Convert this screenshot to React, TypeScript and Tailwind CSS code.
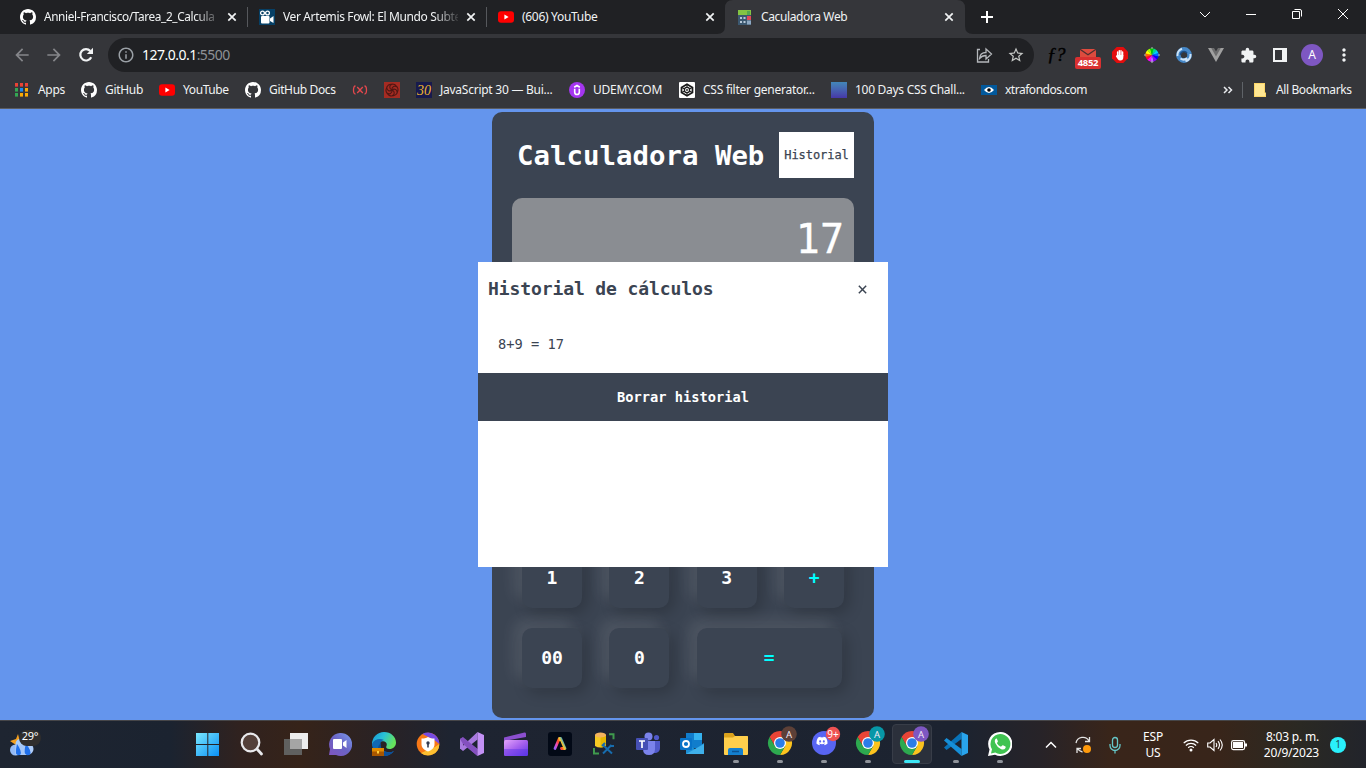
import React from 'react';
import { FaDiscord } from 'react-icons/fa';
import {
  MdArrowBack,
  MdArrowForward,
  MdInfoOutline,
  MdStarBorder,
  MdMoreVert,
  MdExtension,
} from 'react-icons/md';

type IconProps = { className?: string };

const GitHubIcon = ({ className = 'size-4' }: IconProps) => (
  <svg viewBox="0 0 16 16" className={className} fill="#fff">
    <path d="M8 0C3.58 0 0 3.58 0 8c0 3.54 2.29 6.53 5.47 7.59.4.07.55-.17.55-.38 0-.19-.01-.82-.01-1.49-2.01.37-2.53-.49-2.69-.94-.09-.23-.48-.94-.82-1.13-.28-.15-.68-.52-.01-.53.63-.01 1.08.58 1.23.82.72 1.21 1.87.87 2.33.66.07-.52.28-.87.51-1.07-1.78-.2-3.64-.89-3.64-3.95 0-.87.31-1.59.82-2.15-.08-.2-.36-1.02.08-2.12 0 0 .67-.21 2.2.82.64-.18 1.32-.27 2-.27.68 0 1.36.09 2 .27 1.53-1.04 2.2-.82 2.2-.82.44 1.1.16 1.92.08 2.12.51.56.82 1.27.82 2.15 0 3.07-1.87 3.75-3.65 3.95.29.25.54.73.54 1.48 0 1.07-.01 1.93-.01 2.2 0 .21.15.46.55.38A8.013 8.013 0 0 0 16 8c0-4.42-3.58-8-8-8z" />
  </svg>
);

const YouTubeIcon = () => (
  <svg viewBox="0 0 16 16" className="size-4">
    <rect x="0" y="2.3" width="16" height="11.4" rx="3" fill="#f00" />
    <path d="M6.4 5.6v4.8L10.6 8z" fill="#fff" />
  </svg>
);

const CameraIcon = () => (
  <svg viewBox="0 0 16 16" className="size-4">
    <rect width="16" height="16" fill="#064066" />
    <circle cx="3.5" cy="4" r="1.9" fill="none" stroke="#fff" strokeWidth="1.3" />
    <circle cx="8.5" cy="4" r="1.9" fill="none" stroke="#fff" strokeWidth="1.3" />
    <rect x="2" y="7" width="8.5" height="7.5" rx="1" fill="#fff" />
    <path d="M11 9.5 14.5 7v7L11 12z" fill="#fff" />
  </svg>
);

const CalculatorIcon = () => (
  <svg viewBox="0 0 16 16" className="size-4">
    <rect x="1" y="1" width="13" height="15" fill="#3c5870" />
    <rect x="1" y="1" width="13" height="5" fill="#84c443" />
    <rect x="10" y="2" width="3" height="4" fill="#55a84f" />
    <path d="M3 8h2v2H3zM6.5 8h2v2h-2zM3 12h2v2H3zM6.5 12h2v2h-2z" fill="#b8c9d9" />
    <rect x="10" y="7" width="4" height="4" fill="#e0495a" />
    <rect x="10" y="11.5" width="4" height="4" fill="#8fa9c4" />
  </svg>
);

const Cross = () => (
  <svg viewBox="0 0 16 16" className="size-4 shrink-0" stroke="#f1f3f4" strokeWidth="1.7">
    <path d="m4.3 4.3 7.4 7.4M11.7 4.3l-7.4 7.4" />
  </svg>
);

const AppsIcon = () => {
  const colors = ['#ea4335', '#ea4335', '#ea4335', '#34a853', '#1a8cf0', '#fbab05', '#34a853', '#fbab05', '#fbab05'];
  return (
    <svg viewBox="0 0 16 16" className="size-4">
      {colors.map((c, i) => (
        <rect key={i} x={1 + (i % 3) * 5} y={1 + Math.floor(i / 3) * 5} width="3" height="3.6" fill={c} />
      ))}
    </svg>
  );
};

const BraceX = () => (
  <svg viewBox="0 0 16 16" className="size-4" fill="none" stroke="#e5484d" strokeWidth="1.3">
    <path d="M3.500 4Q1.500 4 1.500 8T3.500 12M12.500 4q2 0 2 4t-2 4M5.200 5l5.600 6M10.800 5l-5.600 6" />
  </svg>
);

const SwirlIcon = () => (
  <svg viewBox="0 0 16 16" className="size-4">
    <rect width="16" height="16" fill="#a52b22" />
    <g fill="none" stroke="#501713" strokeWidth="1.1">
      {[0, 60, 120, 180, 240, 300].map((a) => (
        <path key={a} d="M8 8c-3-1-3-5 0-6 2 0 4 1 4.500 3" transform={`rotate(${a} 8 8)`} />
      ))}
    </g>
  </svg>
);

const ThirtyIcon = () => (
  <svg viewBox="0 0 16 16" className="size-4">
    <rect width="16" height="16" fill="#171a4d" />
    <text x="8" y="13" textAnchor="middle" fontSize="14" fontStyle="italic" fontFamily="Liberation Serif, serif" fill="#efb42e">
      30
    </text>
  </svg>
);

const UdemyIcon = () => (
  <svg viewBox="0 0 16 16" className="size-4">
    <circle cx="8" cy="8" r="8" fill="#a435f0" />
    <path d="M5.700 6.800v3.400a2.300 2.300 0 0 0 4.600 0V6.800M5.200 5.200 8 3.500l2.800 1.700" fill="none" stroke="#fff" strokeWidth="1.600" />
  </svg>
);

const FilterIcon = () => (
  <svg viewBox="0 0 16 16" className="size-4">
    <rect width="16" height="16" rx="1" fill="#fff" />
    <path d="M8 2.300 13.500 5.500v5L8 13.700l-5.500-3.200v-5z" fill="none" stroke="#1b1b1b" strokeWidth="1.700" />
    <path d="M8 2.500v3M8 10.500v3M2.500 5.500 13.500 10.500M13.500 5.500 2.500 10.500" stroke="#1b1b1b" strokeWidth="1.100" />
    <circle cx="8" cy="8" r="2.600" fill="#fff" stroke="#1b1b1b" strokeWidth="1.300" />
    <circle cx="8" cy="8" r=".9" fill="#1b1b1b" />
  </svg>
);

const GradientIcon = () => <div className="size-4 bg-linear-to-b from-[#4286b8] to-[#4637a8]" />;

const EyeIcon = () => (
  <svg viewBox="0 0 16 16" className="size-4">
    <rect y="3" width="16" height="10" fill="#02599c" />
    <path d="M3 8q5-6 10 0-5 6-10 0z" fill="#fff" />
    <circle cx="8" cy="8" r="1.800" fill="#000" />
  </svg>
);

const tabs = [
  { icon: <GitHubIcon />, title: 'Anniel-Francisco/Tarea_2_Calcula', track: 'text-[11.8px] tracking-[-0.36px]' },
  { icon: <CameraIcon />, title: 'Ver Artemis Fowl: El Mundo Subte', track: 'text-[12px] tracking-[-0.37px]' },
  { icon: <YouTubeIcon />, title: '(606) YouTube', track: 'text-[12px] tracking-[-0.3px]' },
  { icon: <CalculatorIcon />, title: 'Caculadora Web', track: 'text-[12px] tracking-[-0.38px]' },
];

const windowButtons = [
  'M-5-2 0 3 5-2',
  'M-5 .5H5',
  'M-4.500-2.500h7v7h-7zM-2.500-4.500h5.500q1.500 0 1.500 1.500v5.500',
  'M-5-5 5 5M5-5-5 5',
];

function TabStrip() {
  return (
    <div className="flex h-[34px] bg-[#202124] pl-2 text-xs text-[#f1f3f4]">
      {tabs.map((t, i) => (
        <div key={t.title} className="relative flex w-[239px] shrink-0">
          {i === 3 && (
            <svg viewBox="0 0 256 34" className="absolute -left-2 top-0 h-[34px] w-[256px]">
              <path d="M0 34q8 0 8-8V8q0-8 8-8h224q8 0 8 8v18q0 8 8 8z" fill="#35363a" />
            </svg>
          )}
          <div className="relative flex grow items-center pl-3 pr-[7px]">
            <div className="size-4 shrink-0">{t.icon}</div>
            <div className={`ml-2 mr-[5px] w-[175px] whitespace-nowrap ${t.track} ${i < 2 ? 'mask-r-from-86% mask-r-to-102%' : ''}`}>
              {t.title}
            </div>
            <Cross />
          </div>
          {i < 2 && <div className="absolute -right-px top-[7px] h-5 w-px bg-[#56585c]" />}
        </div>
      ))}
      <div className="flex grow items-center justify-between pl-[14px]">
        <svg viewBox="0 0 18 18" className="size-[18px]" stroke="#fff" strokeWidth="2">
          <path d="M9 3v12M3 9h12" />
        </svg>
        <div className="flex h-full items-start">
          {windowButtons.map((d) => (
            <svg key={d} viewBox="-23 -14 46 28" className="h-7 w-[46px]" fill="none" stroke="#fff" strokeWidth="1">
              <path d={d} />
            </svg>
          ))}
        </div>
      </div>
    </div>
  );
}

const MailBadge = () => (
  <div className="flex w-[26px] shrink-0 flex-col items-center pt-[7px]">
    <svg viewBox="0 0 16 8" className="h-2 w-4">
      <path d="M0 0h16v8H0z" fill="#dd4b3e" />
      <path d="M0 .3l8 5.500L16 .3" fill="none" stroke="#4d2f30" strokeWidth="1.300" />
    </svg>
    <div className="flex h-3 w-[26px] items-center justify-center rounded-[2px] bg-[#d93030] text-[9.500px] font-bold leading-none tracking-[-0.3px] text-white">
      4852
    </div>
  </div>
);

const HandIcon = () => (
  <svg viewBox="0 0 16 16" className="size-4">
    <path d="M4.700 0h6.600L16 4.700v6.600L11.300 16H4.700L0 11.300V4.700z" fill="#e40d0d" />
    <path d="M5.600 5v4.500M7.300 3.600V9M9 3.600V9M10.600 5v4" stroke="#fff" strokeWidth="1.400" strokeLinecap="round" />
    <path d="M4.900 8h6.400v2.500q0 3-3 3-1.700 0-2.500-1.300l-2-3z" fill="#fff" />
  </svg>
);

const WheelIcon = () => {
  const colors = ['#b6f', '#f0f', '#f03', '#f60', '#ff0', '#9f0', '#0c0', '#0d8', '#0cf', '#06f', '#00f', '#80f'];
  return (
    <svg viewBox="-8 -8 16 16" className="size-4">
      {colors.map((c, i) => (
        <path key={c} d="M0 0-1.900-6.400A6.700 6.700 0 0 1 1.900-6.400z" fill={c} transform={`rotate(${i * 30 + 180})`} />
      ))}
      <path d="M0-8v2M0 6v2M-8 0h2M6 0h2" stroke="#bbb" strokeWidth="1" />
    </svg>
  );
};

const RingIcon = () => (
  <svg viewBox="0 0 16 16" className="size-4" fill="none">
    <circle cx="8" cy="8" r="5.600" stroke="#4688c8" strokeWidth="4.600" />
    <path d="M1.500 9A6.700 6.700 0 0 1 6 1.800M14.500 7a6.700 6.700 0 0 1-5 7.300M4.500 11.500Q8 14 11 11" stroke="#cfe4f7" strokeWidth="2" />
    <path d="M4.300 8A3.700 3.700 0 0 1 11 6" stroke="#1d4e86" strokeWidth="1.500" />
  </svg>
);

const VueIcon = () => (
  <svg viewBox="0 0 16 16" className="size-4">
    <path d="M0 1h5l3 5 3-5h5L8 15z" fill="#a0a0a0" />
    <path d="M3.200 1H6l2 3.500L10 1h2.800L8 9.500z" fill="#6d6d6e" />
  </svg>
);

const Slot = ({ children }: { children: React.ReactNode }) => (
  <div className="flex w-8 shrink-0 items-center justify-center">{children}</div>
);

function Toolbar() {
  return (
    <div className="flex h-[42px] items-center bg-[#35363a] pl-[6px]">
      <Slot><MdArrowBack className="size-5 text-[#85868a]" /></Slot>
      <Slot><MdArrowForward className="size-5 text-[#85868a]" /></Slot>
      <Slot>
        <svg viewBox="0 0 16 16" className="size-4">
          <path d="M13.200 10.200A5.700 5.700 0 1 1 12.300 4" fill="none" stroke="#f1f3f4" strokeWidth="2.200" />
          <path d="M15 .8V7H8.800z" fill="#f1f3f4" />
        </svg>
      </Slot>
      <div className="ml-[6px] flex h-[34px] w-[926px] items-center rounded-full bg-[#202124] pl-[9px]">
        <MdInfoOutline className="size-[18px] text-[#9aa0a6]" />
        <div className="ml-[7px] grow text-sm tracking-[-0.52px] text-white">
          127.0.0.1<span className="text-[#8e9196]">:5500</span>
        </div>
        <Slot>
          <svg viewBox="0 0 18 18" className="size-[18px]" fill="none" stroke="#b4b7bb" strokeWidth="1.300">
            <path d="M5 3.500H2.500V16h11v-3M4.500 12.500Q5 6.500 11 6.500V3l5.500 5-5.500 5V9.500Q7 9.500 4.500 12.500z" />
          </svg>
        </Slot>
        <Slot><MdStarBorder className="size-[18px] text-[#c4c7c5]" /></Slot>
        <div className="w-[2px]" />
      </div>
      <div className="flex grow items-center pl-[6px]">
        <Slot>
          <span className="pb-[2px] font-['Liberation_Serif',serif] text-[19px] italic leading-none tracking-[-0.5px] text-black [-webkit-text-stroke:0.4px_#000]">ƒ?</span>
        </Slot>
        <Slot><MailBadge /></Slot>
        <Slot><HandIcon /></Slot>
        <Slot><WheelIcon /></Slot>
        <Slot><RingIcon /></Slot>
        <Slot><VueIcon /></Slot>
        <Slot><MdExtension className="size-[17px] text-[#f1f3f4]" /></Slot>
        <Slot>
          <svg viewBox="0 0 14 14" className="size-[14px]">
            <path d="M1 1h12v12H1z" fill="none" stroke="#f1f3f4" strokeWidth="2" />
            <rect x="9" y="1" width="4" height="12" fill="#f1f3f4" />
          </svg>
        </Slot>
        <Slot>
          <div className="flex size-[22px] shrink-0 items-center justify-center rounded-full bg-[#7e57c2] text-xs text-white">A</div>
        </Slot>
        <Slot><MdMoreVert className="size-5 text-[#f1f3f4]" /></Slot>
      </div>
    </div>
  );
}

const bookmarks = [
  { icon: <AppsIcon />, text: 'Apps', box: 'w-[27px] tracking-[-0.3px]' },
  { icon: <GitHubIcon />, text: 'GitHub', box: 'w-[38px] tracking-[-0.3px]' },
  { icon: <YouTubeIcon />, text: 'YouTube', box: 'w-[46px] tracking-[-0.4px]' },
  { icon: <GitHubIcon />, text: 'GitHub Docs', box: 'w-[67px] tracking-[-0.35px]' },
  { icon: <BraceX />, text: '', box: '' },
  { icon: <SwirlIcon />, text: '', box: '' },
  { icon: <ThirtyIcon />, text: 'JavaScript 30 — Bui...', box: 'w-[113px] tracking-[-0.25px]' },
  { icon: <UdemyIcon />, text: 'UDEMY.COM', box: 'w-[70px] tracking-[-0.25px]' },
  { icon: <FilterIcon />, text: 'CSS filter generator...', box: 'w-[112px] tracking-[-0.25px]' },
  { icon: <GradientIcon />, text: '100 Days CSS Chall...', box: 'w-[110px] tracking-[-0.28px]' },
  { icon: <EyeIcon />, text: 'xtrafondos.com', box: 'w-[82px] tracking-[-0.48px]' },
];

function Bookmarks() {
  return (
    <div className="flex h-[33px] items-center border-b border-[#5a5c61] bg-[#35363a] pb-[5px] pl-[14px] text-xs text-[#f1f3f4]">
      <div className="flex grow items-center gap-4">
        {bookmarks.map((b, i) => (
          <div key={i} className="flex items-center gap-2">
            <div className="size-4 shrink-0">{b.icon}</div>
            {b.text && <div className={`whitespace-nowrap ${b.box}`}>{b.text}</div>}
          </div>
        ))}
      </div>
      <svg viewBox="0 0 10 8" className="mr-[9px] h-2 w-[10px]" fill="none" stroke="#e8eaed" strokeWidth="1.500">
        <path d="m1 1 3 3-3 3M5.500 1l3 3-3 3" />
      </svg>
      <div className="h-4 w-px bg-[#5f6368]" />
      <svg viewBox="0 0 12 14" className="ml-[11px] h-[14px] w-3">
        <path d="M0 0h11v9l1 1v4H0z" fill="#fcd668" />
        <path d="M1 1h9v9h1v3H1z" fill="#ffe793" />
      </svg>
      <div className="ml-[10px] mr-[14px] w-[76px] whitespace-nowrap tracking-[-0.4px]">All Bookmarks</div>
    </div>
  );
}

const keyBase =
  'flex h-[60px] items-center justify-center rounded-[10px] bg-[#3b4452] pb-[2px] shadow-[-8px_-8px_15px_rgba(255,255,255,0.1),5px_5px_15px_rgba(0,0,0,0.2)]';

function Calculator() {
  return (
    <div className="relative flex h-[611px] justify-center bg-[#6495ed] pt-[3px] font-['DejaVu_Sans_Mono','Liberation_Mono',monospace]">
      <div className="flex h-[606px] w-[382px] flex-col rounded-[10px] bg-[#3b4452] p-5 text-white">
        <div className="flex h-[46px] shrink-0 items-center justify-between pl-[5px]">
          <h1 className="whitespace-nowrap pt-[2px] text-[27.400px] font-bold leading-none">Calculadora Web</h1>
          <button className="flex h-[46px] w-[75px] items-center justify-center bg-white text-[12px] tracking-[-0.05px] text-[#3b4452] [-webkit-text-stroke:0.25px_#3b4452]">
            Historial
          </button>
        </div>
        <div className="mt-5 h-[90px] shrink-0 rounded-[10px] bg-[#8a8d92] pr-[10px] pt-[18px] text-right text-[40px] leading-[46px] [-webkit-text-stroke:0.3px_#fff]">17</div>
        <div className="mt-auto grid grid-cols-[60px_60px_60px_60px] gap-x-[27.400px] gap-y-5 px-[10px] pb-[10px] text-[18px] font-bold">
          <div className={keyBase}>1</div>
          <div className={keyBase}>2</div>
          <div className={keyBase}>3</div>
          <div className={`${keyBase} text-[#00ffff]`}>+</div>
          <div className={keyBase}>00</div>
          <div className={keyBase}>0</div>
          <div className={`${keyBase} col-span-2 w-[145px] text-[#00ffff]`}>=</div>
        </div>
      </div>

      <div className="absolute left-[478px] top-[153px] h-[305px] w-[410px] bg-white text-[#3b4452]">
        <div className="flex h-[54px] items-center justify-between pl-[10px] pr-[20px]">
          <h2 className="pb-[2px] text-[18px] font-bold tracking-[-0.100px]">Historial de cálculos</h2>
          <svg viewBox="0 0 12 12" className="size-[11px]" stroke="#3b4452" strokeWidth="1.600">
            <path d="m2 2 8 8M10 2l-8 8" />
          </svg>
        </div>
        <div className="flex h-[57px] items-center pl-5 text-[13.700px]">8+9 = 17</div>
        <button className="flex h-12 w-full items-center justify-center bg-[#3b4452] text-[13.700px] font-bold text-white">
          Borrar historial
        </button>
      </div>
    </div>
  );
}

const ChromeIcon = ({ badge }: { badge: string }) => (
  <svg viewBox="0 0 30 30" className="size-[30px]">
    <g transform="translate(13 17)">
      <path d="M-10.400-6A12 12 0 0 1 10.400-6H0L-5.200 3z" fill="#e84436" />
      <path d="M10.400-6A12 12 0 0 1 0 12L5.200 3 0-6z" fill="#fcc31e" />
      <path d="M0 12A12 12 0 0 1-10.400-6L-5.200 3 5.200 3z" fill="#2da94f" />
      <circle r="6" fill="#fff" />
      <circle r="4.800" fill="#2a7de9" />
    </g>
    <circle cx="22" cy="8" r="7.800" fill={badge} />
    <text x="22" y="11.500" fontSize="9.500" textAnchor="middle" fill="#f3e9f5">A</text>
  </svg>
);

const WindowsIcon = () => (
  <svg viewBox="0 0 24 24" className="size-6">
    <defs>
      <linearGradient id="win" x1="0" y1="0" x2="1" y2="1">
        <stop stopColor="#7ae8ff" />
        <stop offset="1" stopColor="#0a8ff5" />
      </linearGradient>
    </defs>
    <path d="M0 1h11.300v11H0zM12.300 1H23v11H12.300zM0 13h11.300v11H0zM12.300 13H23v11H12.300z" fill="url(#win)" />
  </svg>
);

const SearchIcon = () => (
  <svg viewBox="0 0 24 24" className="size-6" fill="none" stroke="#e9e9ec">
    <circle cx="10.500" cy="10.500" r="8.800" strokeWidth="2.200" fill="#54403a" />
    <path d="m17 17 4.500 5" strokeWidth="2.800" strokeLinecap="round" />
  </svg>
);

const TaskViewIcon = () => (
  <svg viewBox="0 0 24 24" className="size-6">
    <rect x="6" y="1" width="18" height="16" fill="#ededed" />
    <rect x="0" y="7" width="18" height="16" fill="#60605f" />
    <rect x="6" y="7" width="12" height="10" fill="#a5a5a5" />
  </svg>
);

const ChatIcon = () => (
  <svg viewBox="0 0 24 24" className="size-6">
    <defs>
      <linearGradient id="chat" x1="0" y1="1" x2="1" y2="0">
        <stop stopColor="#8054be" />
        <stop offset=".5" stopColor="#6a63c4" />
        <stop offset="1" stopColor="#7a9cef" />
      </linearGradient>
    </defs>
    <path d="M12 1a11.500 11.500 0 1 1-4 22H1l1-6A11.500 11.500 0 0 1 12 1z" fill="url(#chat)" />
    <rect x="5" y="7" width="9" height="10" rx="1" fill="#fff" />
    <path d="m15 10.500 3.500-2.500v8L15 13.500z" fill="#fff" />
  </svg>
);

const EdgeIcon = () => (
  <svg viewBox="0 0 24 24" className="size-6">
    <defs>
      <linearGradient id="edge" x1="0" y1="0" x2="1" y2=".4">
        <stop stopColor="#1596d8" />
        <stop offset=".5" stopColor="#29c1d6" />
        <stop offset="1" stopColor="#66e35b" />
      </linearGradient>
    </defs>
    <path d="M0 12A12 12 0 0 1 12 0c7 0 12 5 12 10.500 0 4-3 6.500-6.500 6.500-3 0-4-1.500-3-3 1.500-4-3-6-8-4C3 11 0 14 0 14z" fill="url(#edge)" />
    <path d="M0 12C2 7 8 6 12 8c-4 1-5 5-2 9 3 4 9 4 12 2-3 4-7 5-10 5A12 12 0 0 1 0 12z" fill="#1068b4" />
    <path d="M9 11q-2 7 5 9 4 1 8-1-4 5-10 5-6-1-6-7 0-4 3-6z" fill="#0d4f98" />
    <rect y="16" width="12" height="8" fill="#e08a00" />
    <path d="M0 19.500h12V24H0z" fill="#a85600" />
    <rect x="5" y="19" width="2" height="2.500" fill="#ffcf3b" />
  </svg>
);

const BrowserShieldIcon = () => (
  <svg viewBox="0 0 24 24" className="size-6">
    <circle cx="12" cy="12" r="11.300" fill="#f87816" />
    <path d="M6.500 2A11.300 11.300 0 0 1 23.300 12l-5-4z" fill="#774be2" />
    <path d="M23.300 12A11.300 11.300 0 0 1 5 21l14-6z" fill="#fdbf30" />
    <path d="M12 5c3 2 6.500 1.500 6.500 1.500v6c0 3.500-3.500 6-6.500 7-3-1-6.500-3.500-6.500-7v-6S9 7 12 5z" fill="#fff" />
    <circle cx="12" cy="11" r="1.700" fill="#343b51" />
    <path d="M11.200 11h1.600v4.500h-1.600z" fill="#343b51" />
  </svg>
);

const VisualStudioIcon = () => (
  <svg viewBox="0 0 24 24" className="size-6">
    <path d="m0 7 2.500-1.500L17.500 17v7L0 9z" fill="#8d58c8" />
    <path d="M0 17V7l3 2v6zM0 16.500 17.500 0v7.500L3 19z" fill="#a879df" />
    <path d="m0 7 3-2 14.500 12v7L3 12z" fill="#8450bf" />
    <path d="m17.500 0 6.500 3v18l-6.500 3z" fill="#c391f5" />
  </svg>
);

const ClipchampIcon = () => (
  <svg viewBox="0 0 24 24" className="size-6">
    <defs>
      <linearGradient id="clip" x1="0" y1="0" x2="1" y2="1">
        <stop stopColor="#e4a4fb" />
        <stop offset=".5" stopColor="#a660ee" />
        <stop offset="1" stopColor="#5836e8" />
      </linearGradient>
    </defs>
    <path d="M0 5.500 20.500.500Q22 0 22 2v3L0 9z" fill="#8b4fcf" />
    <rect y="8" width="24" height="16" rx="1.500" fill="url(#clip)" />
    <path d="M0 17h24v5q0 2-2 2H2q-2 0-2-2z" fill="#5b34e6" opacity=".45" />
  </svg>
);

const AdobeExpressIcon = () => (
  <svg viewBox="0 0 24 24" className="size-6">
    <defs>
      <linearGradient id="adb" x1="0" y1="1" x2="1" y2=".5">
        <stop stopColor="#985ff8" />
        <stop offset=".3" stopColor="#f049b3" />
        <stop offset=".55" stopColor="#ff4a20" />
        <stop offset=".75" stopColor="#f8c830" />
        <stop offset="1" stopColor="#36a8d0" />
      </linearGradient>
    </defs>
    <rect width="24" height="24" rx="3" fill="#020916" />
    <path d="M7 16.500 11.300 6.500h1.400L17 16.500h-3.500" fill="none" stroke="url(#adb)" strokeWidth="2.800" strokeLinejoin="round" strokeLinecap="round" />
  </svg>
);

const DatabaseToolIcon = () => (
  <svg viewBox="0 0 24 24" className="size-6">
    <path d="M17 2.200h4.500v5M2 16v5.500h5" fill="none" stroke="#3f9a4d" strokeWidth="2" />
    <path d="M3 3v11q5 3 11 0V3z" fill="#f6ca24" />
    <path d="M8.500 4H14v10q-2 1-5.500 1.500z" fill="#e6b800" />
    <ellipse cx="8.500" cy="3" rx="5.500" ry="2.500" fill="#f5b45e" />
    <path d="m11.500 13.500 8.500 8M19.500 13l-8.500 8.500M10 14l3-3M18 14h4" stroke="#176cae" strokeWidth="2" />
  </svg>
);

const TeamsIcon = () => (
  <svg viewBox="0 0 24 24" className="size-6">
    <circle cx="12.500" cy="4.500" r="4" fill="#7b83eb" />
    <circle cx="20.500" cy="5.500" r="2.600" fill="#5059c9" />
    <path d="M16 9h8v7q0 4-4 5h-4z" fill="#5059c9" />
    <path d="M7 9h12v8q0 6-6 6t-6-6z" fill="#7b83eb" />
    <rect y="6" width="12" height="12" rx="1" fill="#4650b5" />
    <path d="M3 9h6M6 9v7" stroke="#fff" strokeWidth="1.700" />
  </svg>
);

const OutlookIcon = () => (
  <svg viewBox="0 0 24 24" className="size-6">
    <rect x="6" y="1" width="16" height="15" fill="#117dcc" />
    <path d="M14 1h8v7h-8z" fill="#35b2ef" />
    <path d="M6 11l9 6 9-6v11H6z" fill="#1d8fd6" />
    <path d="m6 22 18-10v10z" fill="#3fb0ea" />
    <rect y="6" width="12" height="12" rx="1" fill="#0873c8" />
    <circle cx="6" cy="12" r="3" fill="none" stroke="#fff" strokeWidth="1.800" />
  </svg>
);

const FolderIcon = () => (
  <svg viewBox="0 0 24 24" className="size-6">
    <path d="M0 2q0-1 1-1h8l2 3h12q1 0 1 1v6H0z" fill="#dba21c" />
    <path d="M0 5.500h9l2-1.500h12q1 0 1 1v17q0 1-1 1H1q-1 0-1-1z" fill="#ffcf4c" />
    <path d="M4 23v-5q0-2 2-2h11q2 0 2 2v5z" fill="#1480cf" />
    <path d="M8 19.500h7" stroke="#0b5292" strokeWidth="1.500" />
  </svg>
);

const DiscordIcon = () => (
  <svg viewBox="0 0 30 30" className="size-[30px]">
    <circle cx="13" cy="17" r="12" fill="#5865f2" />
    <FaDiscord x="5" y="9" width="16" height="16" color="#fff" />
    <circle cx="22" cy="8" r="7.200" fill="#ee5253" />
    <text x="22" y="11.800" fontSize="10" textAnchor="middle" fill="#fff">9+</text>
  </svg>
);

const CodeIcon = () => (
  <svg viewBox="0 0 24 24" className="size-6">
    <path d="M0 15.500 17.500 0v7L2.500 18z" fill="#0873b9" />
    <path d="M0 8.500 17.500 24v-7L2.500 6z" fill="#168fd8" />
    <path d="M17.500 0 24 3v18l-6.500 3z" fill="#29a4ec" />
  </svg>
);

const WhatsAppIcon = () => (
  <svg viewBox="0 0 24 24" className="size-6">
    <path d="M12 0a12 12 0 1 1-5 22.700L0 24l1.500-6.500A12 12 0 0 1 12 0z" fill="#fff" />
    <path d="M12 2a10 10 0 1 1-4.700 18.600L3 21.500l1-4.200A10 10 0 0 1 12 2z" fill="#40c351" />
    <path d="M8.200 6.500q-2.200 1.500-1 4.500 2 4.500 6 6.300 3 1 4.300-1.300.4-1.200 0-1.500l-2.500-1.300q-.7-.2-1.500 1-.5.5-1.200.2-2-1-3.200-3-.3-.5.200-1t.6-1.200l-1-2.500q-.3-.4-.7-.2z" fill="#fff" />
  </svg>
);

const apps: { icon: React.ReactNode; raised?: boolean; state?: 'open' | 'active' }[] = [
  { icon: <WindowsIcon /> },
  { icon: <SearchIcon /> },
  { icon: <TaskViewIcon /> },
  { icon: <ChatIcon /> },
  { icon: <EdgeIcon /> },
  { icon: <BrowserShieldIcon /> },
  { icon: <VisualStudioIcon /> },
  { icon: <ClipchampIcon /> },
  { icon: <AdobeExpressIcon /> },
  { icon: <DatabaseToolIcon /> },
  { icon: <TeamsIcon /> },
  { icon: <OutlookIcon /> },
  { icon: <FolderIcon />, state: 'open' },
  { icon: <ChromeIcon badge="#5d4037" />, raised: true, state: 'open' },
  { icon: <DiscordIcon />, raised: true, state: 'open' },
  { icon: <ChromeIcon badge="#0797a7" />, raised: true, state: 'open' },
  { icon: <ChromeIcon badge="#7e57c2" />, raised: true, state: 'active' },
  { icon: <CodeIcon />, state: 'open' },
  { icon: <WhatsAppIcon />, state: 'open' },
];

function Taskbar() {
  return (
    <div className="flex h-12 border-t border-[#464649] bg-[linear-gradient(90deg,#1e2531_0,#1b2330_170px,#30221f_240px,#362319_300px,#282226_390px,#1e2431_450px,#1c2330_960px,#272328_1040px,#39251a_1110px,#38251a_1220px,#2a2923_1300px,#22242b_1366px)] text-xs text-white">
      <div className="w-[186px] pl-[9px] pt-[6px]">
        <div className="relative h-8 w-9">
          <svg viewBox="0 0 26 26" className="mt-[4px] size-[26px]">
            <path d="m9 3 1 4 6-4-3 6 4 4-7 3-9-6 6-2z" fill="#f4a01f" />
            <circle cx="12" cy="13" r="5.500" fill="#a9cdfa" />
            <circle cx="6.500" cy="19" r="5.500" fill="#94bbf6" />
            <circle cx="19" cy="18" r="5.500" fill="#b0cdf9" />
            <path d="M6 14h14v10H6z" fill="#a4c6f8" />
            <path d="M8 13q5 7 3.500 10.500-2.500 2-4.500-1Q6.500 19 8 13zM17 13q6 7 4 10.500-3 2-5-1-1-3.500 1-9.500z" fill="#1f6fea" />
          </svg>
          <div className="absolute -top-[1px] left-[10px] flex h-[16px] w-[22px] items-center justify-center rounded-full bg-[#302e2d] pb-[3px] text-[11px] tracking-[-0.3px]">29°</div>
        </div>
      </div>
      <div className="flex">
        {apps.map((a, i) => (
          <div
            key={i}
            className={`relative mt-[3px] flex h-10 w-11 justify-center ${a.raised ? 'pl-[4px] pt-[2px]' : 'pt-2'}`}
          >
            {a.state === 'active' && <div className="absolute left-[2px] top-0 h-10 w-10 rounded-[4px] border border-[#383d48] bg-[#2b303b]" />}
            <div className="relative">{a.icon}</div>
            {a.state === 'active' && <div className="absolute bottom-[1px] left-[14px] h-[3px] w-4 rounded-full bg-[#3de6f5]" />}
            {a.state === 'open' && <div className="absolute bottom-[1px] left-[19px] h-[3px] w-[6px] rounded-full bg-[#8f939a]" />}
          </div>
        ))}
      </div>
      <div className="flex grow items-center pl-[13px]">
        <Slot>
          <svg viewBox="0 0 12 8" className="h-2 w-3" fill="none" stroke="#fff" strokeWidth="1.500"><path d="m1 6.500 5-5 5 5" /></svg>
        </Slot>
        <Slot>
          <svg viewBox="0 0 18 18" className="size-[18px]" fill="none" stroke="#e4e4e4" strokeWidth="1.300">
            <path d="M2 7a7 7 0 0 1 13-2M15.500 1v4.500H11M7 12.500H3V17M3.500 12.500a7 7 0 0 0 5 3.500" />
            <circle cx="13" cy="13" r="4" fill="#ff9a0c" stroke="none" />
          </svg>
        </Slot>
        <Slot>
          <svg viewBox="0 0 14 18" className="h-[18px] w-[14px]" fill="none" stroke="#66c7c8" strokeWidth="1.300">
            <rect x="4.500" y="1.500" width="5" height="10" rx="2.500" /><path d="M2 8v1.500a5 5 0 0 0 10 0V8M7 14.500v3" />
          </svg>
        </Slot>
        <div className="w-11 text-center text-xs leading-4 tracking-[-0.2px]">ESP<br />US</div>
        <div className="ml-[8px] flex items-center gap-2">
          <svg viewBox="0 0 16 14" className="h-[14px] w-4" fill="none" stroke="#fff" strokeWidth="1.200">
            <path d="M.7 5.200a10.300 10.300 0 0 1 14.600 0M2.900 7.500a7.200 7.200 0 0 1 10.200 0M5.200 9.800a4 4 0 0 1 5.600 0" />
            <circle cx="8" cy="12" r="1.500" fill="#fff" stroke="none" />
          </svg>
          <svg viewBox="0 0 16 14" className="h-[14px] w-4" fill="none" stroke="#fff" strokeWidth="1.100">
            <path d="M.7 5H3l4-3.500v11L3 9H.7zM9 5q1.500 2 0 4M11 3.200q3 3.800 0 7.600M13 1.500q4.500 5.500 0 11" />
          </svg>
          <svg viewBox="0 0 16 12" className="h-3 w-4">
            <rect x=".6" y="1.600" width="13" height="9" rx="1.800" fill="none" stroke="#fff" strokeWidth="1.200" />
            <rect x="2" y="3" width="10" height="6" fill="#fff" /><path d="M14 4.500h2v3h-2z" fill="#fff" />
          </svg>
        </div>
        <div className="ml-[6px] w-[66px] whitespace-nowrap text-right text-xs leading-4 tracking-[-0.2px]">8:03 p. m.<br />20/9/2023</div>
        <div className="ml-[11px] flex size-4 items-center justify-center rounded-full bg-[#29f0fb] text-[10px] text-[#1d4b52]">1</div>
      </div>
    </div>
  );
}

export default function App() {
  return (
    <div className="flex h-[768px] w-[1366px] flex-col overflow-hidden font-['Noto_Sans','Open_Sans',sans-serif]">
      <TabStrip />
      <Toolbar />
      <Bookmarks />
      <Calculator />
      <Taskbar />
    </div>
  );
}
